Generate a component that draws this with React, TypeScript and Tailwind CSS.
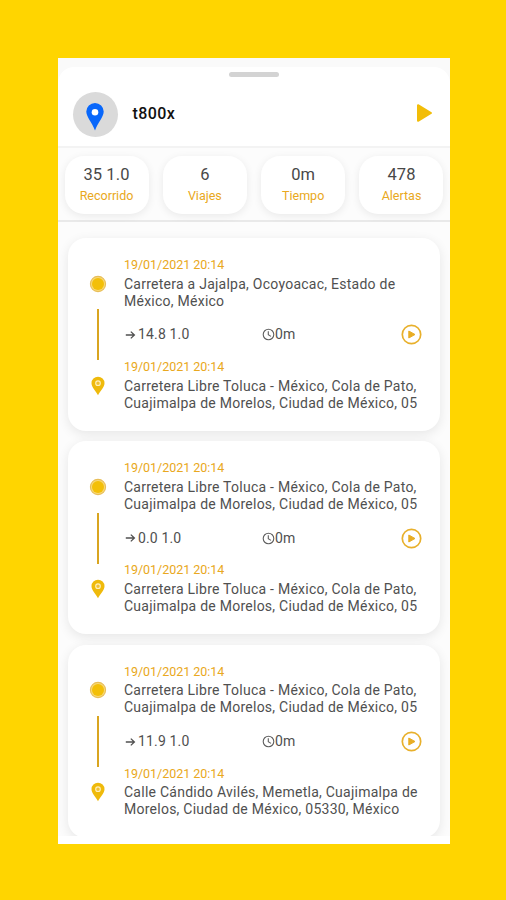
import React from 'react';

const stats = [
  { value: '35 1.0', label: 'Recorrido' },
  { value: '6', label: 'Viajes' },
  { value: '0m', label: 'Tiempo' },
  { value: '478', label: 'Alertas' },
];

const LIBRE = ['Carretera Libre Toluca - México, Cola de Pato,', 'Cuajimalpa de Morelos, Ciudad de México, 05'];

const trips = [
  {
    distance: '14.8 1.0',
    from: ['Carretera a Jajalpa, Ocoyoacac, Estado de', 'México, México'],
    to: LIBRE,
  },
  { distance: '0.0 1.0', from: LIBRE, to: LIBRE },
  {
    distance: '11.9 1.0',
    from: LIBRE,
    to: ['Calle Cándido Avilés, Memetla, Cuajimalpa de', 'Morelos, Ciudad de México, 05330, México'],
  },
];

function Stop({ lines }: { lines: string[] }) {
  return (
    <div>
      <div className="h-[19.7px] text-[12.5px] leading-[18px] tracking-[-0.03px] text-[#e9a820]">19/01/2021 20:14</div>
      {lines.map((line) => (
        <div key={line} className="h-[17px] whitespace-nowrap text-[14px] leading-[17px] tracking-[0.25px] text-[#505050]">
          {line}
        </div>
      ))}
    </div>
  );
}

function Trip({ trip }: { trip: (typeof trips)[number] }) {
  return (
    <article className="flex h-[193px] shrink-0 rounded-[18px] bg-white pt-[18px] shadow-[0_3px_12px_rgba(0,0,0,0.09)]">
      <div className="flex w-[56px] shrink-0 flex-col items-center pl-[3px] pt-[18.7px]">
        <svg width="18" height="18" viewBox="0 0 18 18">
          <circle cx="9" cy="9" r="7.6" fill="#f8d977" stroke="#e8be58" strokeWidth="1.1" />
          <circle cx="9" cy="9" r="6" fill="#f3bf08" />
        </svg>
        <div className="mt-[16.5px] h-[51px] w-[2px] bg-[#d9a520]" />
        <svg className="mt-[15.5px]" width="14" height="20" viewBox="0 0 14 20">
          <path d="M7 .7A6.5 6.5 0 0 0 .5 7.2C.5 11.3 5 15 7 19.3 9 15 13.5 11.3 13.5 7.2A6.5 6.5 0 0 0 7 .7Z" fill="#efba0b" />
          <circle cx="7" cy="7.2" r="2.3" fill="#f1c233" stroke="#fff0bd" strokeWidth="1.1" />
        </svg>
      </div>
      <div className="min-w-0 flex-1">
        <Stop lines={trip.from} />
        <div className="flex h-[48.3px] items-center pr-[18px] pt-[2px] text-[14px] tracking-[0.15px] text-[#505050]">
          <div className="flex w-[138px] items-center gap-[2px] pl-[1px]">
            <svg width="11" height="12" viewBox="0 0 11 12" fill="none" stroke="#505050" strokeWidth="1.3">
              <path d="M.8 6H9.4M5.8 2.6 9.4 6 5.8 9.4" />
            </svg>
            <span>{trip.distance}</span>
          </div>
          <div className="flex flex-1 items-center">
            <svg width="13" height="13" viewBox="0 0 13 13" fill="none" stroke="#606060" strokeWidth="1.1">
              <circle cx="6.5" cy="6.5" r="5.3" />
              <path d="M6.3 3.2V6.8L9 8.4" />
            </svg>
            <span>0m</span>
          </div>
          <svg width="21" height="21" viewBox="0 0 21 21">
            <circle cx="10.5" cy="10.5" r="9.2" fill="none" stroke="#e8b02c" strokeWidth="1.7" />
            <path d="M7.8 7V14L14 10.5Z" fill="#e8ad24" stroke="#e8ad24" strokeLinejoin="round" />
          </svg>
        </div>
        <Stop lines={trip.to} />
      </div>
    </article>
  );
}

export default function App() {
  return (
    <div className="h-[900px] w-[506px] overflow-hidden bg-[#ffd500] pl-[57.5px] pt-[57.5px] font-[Roboto,sans-serif]">
      <main className="flex h-[786px] w-[392px] flex-col overflow-hidden bg-white">
        <header className="h-[90px] shrink-0 border-b-2 border-[#f3f3f3] bg-[#fafafa] pt-[9px]">
          <div className="h-[79px] rounded-t-[16px] bg-white pt-[5px]">
            <div className="mx-auto h-[5px] w-[50px] rounded-full bg-[#d3d3d3]" />
            <div className="flex items-center pl-[15px] pr-[17px] pt-[15px]">
              <div className="flex size-[45px] items-center justify-center rounded-full bg-[#dadada]">
                <svg className="mt-[5px]" width="20" height="29" viewBox="0 0 20 29">
                  <path d="M10 .9A8.7 8.7 0 0 0 1.3 9.6C1.3 15 7 20.5 10 28.5 13 20.5 18.7 15 18.7 9.6A8.7 8.7 0 0 0 10 .9Z" fill="#0867fb" />
                  <circle cx="10" cy="10.2" r="3.3" fill="#fff" />
                </svg>
              </div>
              <div className="flex-1 pl-[15px] text-[16px] font-medium leading-[20px] tracking-[0.4px] text-[#111]">t800x</div>
              <svg className="-mt-[3px]" width="17" height="20" viewBox="0 0 17 20">
                <path d="M2 2.2V17.8L15 10Z" fill="#f2bd08" stroke="#f2bd08" strokeWidth="2" strokeLinejoin="round" />
              </svg>
            </div>
          </div>
        </header>
        <section className="flex h-[74.5px] shrink-0 justify-between border-b-2 border-[#e9e9e9] bg-[#fcfcfc] pl-[7px] pr-[6px] pt-[8px]">
          {stats.map((s) => (
            <div key={s.label} className="h-[58px] w-[84px] rounded-[19px] bg-white pt-[8px] text-center shadow-[0_2px_9px_rgba(0,0,0,0.08)]">
              <div className="text-[16.5px] leading-[22px] tracking-[0.1px] text-[#484848]">{s.value}</div>
              <div className="text-[12.5px] leading-[20px] text-[#e9a820]">{s.label}</div>
            </div>
          ))}
        </section>
        <section className="flex h-[613.5px] shrink-0 flex-col gap-[10.4px] overflow-hidden bg-[#fcfcfc] pl-[10.5px] pr-[9.5px] pt-[16px]">
          {trips.map((t) => (
            <Trip key={t.distance} trip={t} />
          ))}
        </section>
      </main>
    </div>
  );
}
